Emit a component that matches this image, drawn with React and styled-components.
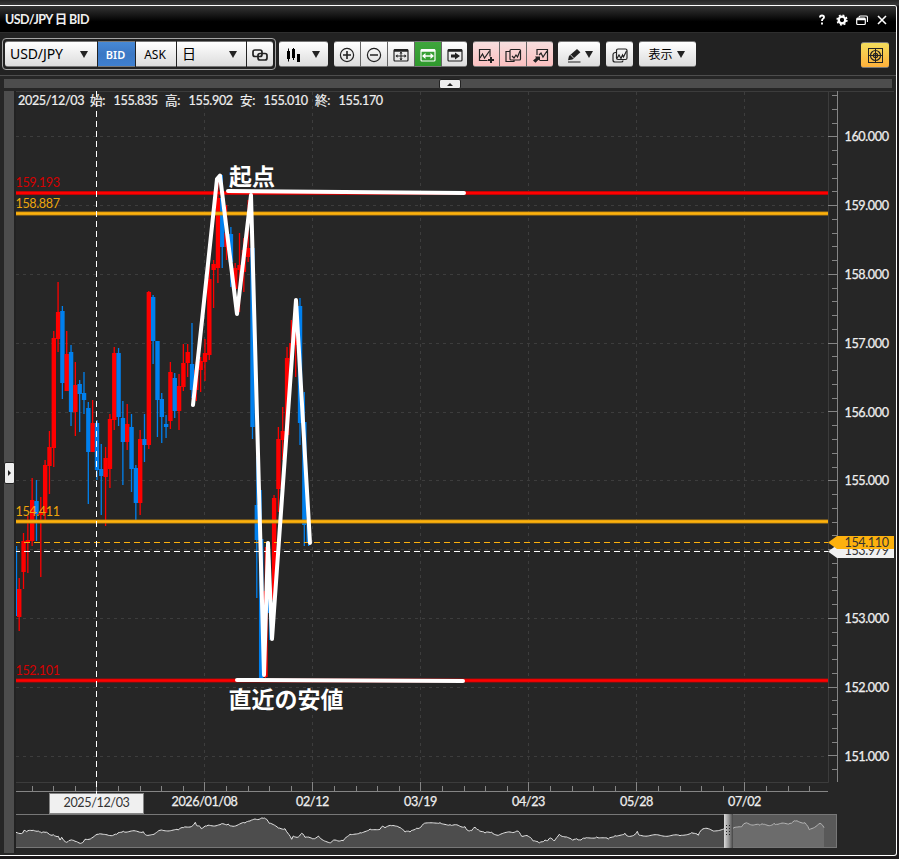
import React from 'react';
import styled, { createGlobalStyle, css } from 'styled-components';

const GlobalStyle = createGlobalStyle`
  * {
    box-sizing: border-box;
  }
  body {
    margin: 0;
    background: #1b181a;
    font-family: Lato, 'Noto Sans CJK JP', sans-serif;
    overflow: hidden;
  }
  svg {
    display: block;
  }
`;

const Desktop = styled.div`
  width: 899px;
  height: 859px;
  padding-top: 5px;
  background: linear-gradient(#262626, #3a3a3a 5px, #1b181a 6px);
`;

const Window = styled.div`
  width: 897px;
  height: 851px;
  display: flex;
  flex-direction: column;
  border: 1px solid #fff;
  border-left: 0;
  border-radius: 0 3px 3px 0;
  background: #262626;
  overflow: hidden;
`;

const TitleBar = styled.div`
  height: 26px;
  flex: none;
  display: flex;
  align-items: center;
  justify-content: space-between;
  padding: 0 8px 2px 5px;
  background: linear-gradient(#353535, #000 60%);
  color: #eee;
  font-size: 12.5px;
  font-weight: 700;
  letter-spacing: -0.55px;
`;

const WindowButtons = styled.div`
  display: flex;
  align-items: center;
  gap: 8px;
  padding-top: 3px;
`;

const Toolbar = styled.div`
  height: 44px;
  flex: none;
  display: flex;
  align-items: flex-start;
  padding: 5px 7px 0 2px;
  border-top: 1px solid #2e2e2e;
  border-bottom: 1px solid #4d4d4d;
  background: #222;
`;

const SymbolGroup = styled.div`
  display: flex;
  gap: 1px;
  width: 274px;
  height: 32px;
  padding: 2px;
  border: 1px solid #a5a5a5;
  border-radius: 4px;
`;

const ButtonGroup = styled.div`
  display: flex;
  gap: 1px;
  margin: ${({ $top }) => $top || 3}px 0 0 ${({ $gap }) => $gap || 6}px;
  background: #666;
  border-radius: 3px;
`;

const Arrow = styled.span`
  width: 0;
  border: 4px solid transparent;
  border-top: 7px solid #222;
  border-bottom: 0;
  margin-left: ${({ $gap }) => $gap || 0}px;
`;

const tones = {
  light: 'linear-gradient(#fff, #dcdcdc)',
  blue: 'linear-gradient(#4789d6, #3c78c4 50%, #3f80d0)',
  green: 'linear-gradient(#3fa63c, #2f9a2d)',
  pink: 'linear-gradient(#f6dede, #fbc0c0)',
  gold: 'linear-gradient(#f3dd5c, #ffb13b)',
};

const ToolButton = styled.button`
  width: ${({ $width }) => $width || 26}px;
  height: 26px;
  flex: none;
  display: flex;
  align-items: center;
  justify-content: center;
  margin: 0;
  padding: 0;
  border: 1px solid #777;
  border-width: 1px 0;
  background: ${({ $tone }) => tones[$tone || 'light']};
  color: ${({ $tone }) => ($tone === 'blue' || $tone === 'green' ? '#fff' : '#222')};
  font: 12px 'Noto Sans', 'Noto Sans CJK JP', sans-serif;

  &:first-child {
    border-radius: 3px 0 0 3px;
  }
  &:last-child {
    border-radius: 0 3px 3px 0;
  }
  &:only-child {
    border-radius: 3px;
  }
  svg {
    margin-top: 2px;
  }

  ${({ $tone }) =>
    $tone === 'blue' &&
    css`
      padding-right: 2px;
      font-weight: 600;
      font-size: 11px;
    `}
  ${({ $text }) =>
    $text &&
    css`
      padding-right: 2px;
      color: #000;
    `}
  ${({ $select }) =>
    $select &&
    css`
      justify-content: space-between;
      padding: 0 9px 2px 5px;
      font-size: 14px;
      letter-spacing: -0.1px;
      color: #000;

      ${Arrow} {
        margin-top: 2px;
      }
    `}
`;

const Spring = styled.div`
  flex: 1;
`;

const Splitter = styled.div`
  height: 9px;
  flex: none;
  display: flex;
  justify-content: center;
  margin: 3px 4px;
  background: #4d4d4d;
`;

const CollapseTop = styled.div`
  width: 22px;
  height: 10px;
  display: flex;
  align-items: center;
  justify-content: center;
  margin-left: 4px;
  border: 1px solid #222;
  border-radius: 2px;
  background: #eee;

  &::after {
    content: '';
    border: 3px solid transparent;
    border-top: 0;
    border-bottom: 3px solid #222;
  }
`;

const Workspace = styled.div`
  flex: 1;
  display: flex;
`;

const SideRail = styled.div`
  width: 12px;
  height: 762px;
  margin-left: 4px;
  padding-top: 371px;
  background: #4d4d4d;
  border-right: 2px solid #222;
`;

const CollapseSide = styled.div`
  width: 11px;
  height: 22px;
  display: flex;
  align-items: center;
  justify-content: center;
  border: 1px solid #222;
  border-radius: 2px;
  background: #eee;

  &::after {
    content: '';
    border: 3px solid transparent;
    border-left: 3px solid #222;
    border-right: 0;
  }
`;

const ChartColumn = styled.div`
  display: flex;
  flex-direction: column;
`;

const AxisText = styled.text`
  font: 400 12.6px Lato, sans-serif;
  letter-spacing: -0.38px;
  fill: ${({ $color }) => $color || '#eee'};
  stroke: ${({ $bold }) => ($bold ? '#eee' : 'none')};
  stroke-width: 0.25px;
`;

const InfoText = styled.text`
  font: 400 12.6px Lato, 'Noto Sans CJK JP', sans-serif;
  letter-spacing: -0.36px;
  fill: #eee;
  stroke: #eee;
  stroke-width: 0.2px;
`;

const NoteText = styled.text`
  font: 700 23px 'Noto Sans CJK JP', sans-serif;
  fill: #fff;
`;

// up/down flag, then high, body top, body bottom, low (y in chart px)
const candles = [
  [0, 545, 546, 616, 630], [1, 578, 589, 617, 631], [1, 533, 541, 572, 589],
  [1, 516, 540, 542, 573], [1, 478, 500, 541, 546], [0, 480, 501, 514, 541],
  [1, 497, 512, 515, 577], [1, 460, 465, 513, 520], [1, 431, 447, 466, 494],
  [1, 331, 338, 448, 467], [1, 282, 312, 339, 352], [0, 306, 311, 383, 399],
  [1, 331, 354, 391, 391], [0, 345, 352, 412, 426], [1, 362, 385, 412, 436],
  [0, 380, 384, 394, 432], [0, 372, 393, 400, 414], [0, 402, 408, 452, 504],
  [1, 400, 423, 452, 452], [0, 420, 423, 470, 480], [0, 444, 469, 476, 515],
  [1, 447, 458, 477, 526], [1, 414, 419, 469, 488], [1, 347, 353, 420, 430],
  [0, 348, 353, 417, 426], [0, 401, 418, 442, 485], [1, 404, 424, 442, 450],
  [0, 414, 427, 469, 492], [0, 465, 468, 503, 520], [1, 430, 439, 503, 515],
  [0, 414, 439, 445, 462], [1, 291, 292, 445, 449], [0, 295, 297, 341, 364],
  [0, 341, 341, 400, 437], [0, 393, 399, 417, 443], [0, 415, 424, 427, 438],
  [1, 362, 372, 421, 429], [0, 373, 378, 411, 418], [1, 374, 386, 411, 430],
  [1, 344, 363, 387, 391], [1, 344, 352, 363, 377], [0, 323, 364, 390, 398],
  [1, 362, 370, 390, 401], [1, 357, 361, 370, 392], [1, 339, 353, 362, 381],
  [1, 265, 279, 355, 360], [1, 260, 264, 270, 308], [1, 180, 198, 268, 283],
  [0, 175, 198, 247, 268], [1, 205, 233, 247, 260], [0, 227, 234, 262, 287],
  [1, 263, 268, 289, 300], [1, 233, 265, 270, 312], [1, 238, 250, 272, 292],
  [1, 200, 248, 257, 262], [0, 225, 248, 427, 439], [0, 457, 505, 540, 598],
  [0, 490, 539, 678, 678], [1, 547, 591, 677, 678], [0, 560, 595, 613, 640],
  [1, 495, 498, 600, 625], [1, 427, 439, 489, 512], [1, 407, 431, 440, 460],
  [1, 347, 358, 435, 440], [1, 320, 343, 360, 370], [1, 310, 340, 345, 377],
  [0, 298, 306, 423, 445], [0, 392, 422, 525, 546], [0, 522, 525, 543, 546],
];

const CANDLE_STEP = 4.32;
const FIRST_CANDLE = 97 - CANDLE_STEP * 19;
const PRICE_STEP = 68.8;

const prices = [160, 159, 158, 157, 156, 155, 154, 153, 152, 151];
const dates = ['2026/01/08', '02/12', '03/19', '04/23', '05/28', '07/02'];
const priceY = (price) => Math.round(136.4 + (160 - price) * PRICE_STEP) + 0.5;

const levels = [
  { y: 193, price: '159.193', color: '#f00', edge: '#a80808', label: '#d40000' },
  { y: 213.5, price: '158.887', color: '#fdb10d', edge: '#b58012', label: '#eda50c' },
  { y: 521.5, price: '154.411', color: '#fdb10d', edge: '#b58012', label: '#eda50c' },
  { y: 680.5, price: '152.101', color: '#f00', edge: '#a80808', label: '#d40000' },
];

// traced in thirds of a pixel
const history = [
  48, 217, 68, 219, 72, 211, 80, 215, 100, 211, 115, 213, 125, 219, 135, 217, 148, 223, 160, 224,
  175, 229, 180, 240, 185, 232, 192, 242, 200, 247, 210, 241, 225, 244, 245, 249, 255, 238, 275, 234,
  295, 223, 325, 226, 350, 223, 370, 214, 430, 215, 440, 226, 462, 223, 480, 211, 535, 210, 550, 203,
  578, 197, 586, 187, 592, 198, 598, 198, 604, 206, 620, 198, 660, 194, 685, 192, 695, 198, 735, 189,
  750, 183, 765, 177, 790, 175, 800, 178, 808, 190, 835, 204, 855, 206, 875, 238, 880, 228, 895, 231,
  905, 220, 915, 232, 930, 233, 940, 236, 955, 228, 970, 241, 992, 248, 1005, 240, 1030, 242,
  1050, 223, 1080, 218, 1110, 207, 1140, 208, 1145, 200, 1155, 203, 1175, 197, 1197, 202, 1215, 216,
  1230, 216, 1250, 204, 1262, 202, 1270, 192, 1320, 188, 1350, 194, 1395, 200, 1405, 212, 1415, 212,
  1425, 202, 1435, 209, 1455, 219, 1475, 217, 1495, 226, 1530, 216, 1555, 214, 1565, 229, 1585, 229,
  1600, 243, 1618, 249, 1635, 240, 1643, 242, 1652, 234, 1663, 243, 1678, 223, 1695, 231, 1718, 241,
  1730, 236, 1743, 240, 1755, 235, 1790, 231, 1825, 237, 1845, 227, 1875, 220, 1885, 229, 1905, 223,
  1912, 214, 1918, 226, 2040, 227, 2075, 218, 2095, 226, 2105, 209, 2125, 206, 2140, 213, 2175, 205,
  2198, 206, 2225, 200, 2235, 190, 2280, 196, 2290, 193, 2308, 197, 2322, 190, 2330, 193, 2370, 190,
  2387, 183, 2415, 188, 2428, 209, 2460, 190, 2472, 203,
];

const historyPoints = () => {
  const points = [];
  for (let i = 0; i < history.length - 2; i += 2) {
    const [x1, y1, x2, y2] = history.slice(i, i + 4);
    const steps = Math.max(1, Math.round((x2 - x1) / 4));
    for (let s = 0; s < steps; s += 1) {
      const x = x1 + ((x2 - x1) * s) / steps;
      const wobble = s ? Math.sin(x * 1.7) * 2.4 : 0;
      points.push([x / 3, 760 + (y1 + ((y2 - y1) * s) / steps + wobble) / 3]);
    }
  }
  points.push([824, 827.7]);
  return points.map(([x, y]) => `${x.toFixed(1)},${y.toFixed(1)}`).join(' ');
};

const Icon = ({ children, width = 1.2 }) => (
  <svg
    width="18"
    height="18"
    viewBox="0 0 18 18"
    fill="none"
    stroke="currentColor"
    strokeWidth={width}
  >
    {children}
  </svg>
);

const LinkIcon = () => (
  <Icon width={1.7}>
    <rect x="2" y="4" width="9" height="6.5" rx="2" />
    <rect x="7" y="7.5" width="9" height="6.5" rx="2" />
  </Icon>
);

const CandleIcon = () => (
  <svg width="15" height="18" viewBox="0 0 15 18" fill="#000">
    <path d="M0 5h3v8H0zM1 2.500h1v13H1zM5 3h3v9H5zM6 2h1v12H6zM10 8h3v8h-3z" />
  </svg>
);

const ZoomIcon = ({ plus }) => (
  <Icon>
    <circle cx="9" cy="9" r="6.6" />
    <path d={plus ? 'M5 9h8M9 5v8' : 'M5 9h8'} strokeWidth="1.6" />
  </Icon>
);

const FrameIcon = ({ children }) => (
  <Icon>
    <rect x="2" y="3.5" width="14" height="11.5" rx="1" />
    <path d="M2 4.500h14" strokeWidth="2.4" />
    {children}
  </Icon>
);

const MoveIcon = () => (
  <FrameIcon>
    <path d="M4.500 10h9M9 6v8" strokeWidth="1" />
    <path
      d="M3.500 10l2-1.800v3.600zM14.500 10l-2-1.800v3.600zM9 5.500l-1.600 2h3.200zM9 14.500l-1.600-2h3.200z"
      fill="currentColor"
      stroke="none"
    />
  </FrameIcon>
);

const FitIcon = () => (
  <FrameIcon>
    <path d="M5 10h8" strokeWidth="1.6" />
    <path d="M3 10l3.500-3v6zM15 10l-3.500-3v6z" fill="currentColor" stroke="none" />
  </FrameIcon>
);

const ForwardIcon = () => (
  <FrameIcon>
    <path d="M5 8.500h4v-2l5 3.500-5 3.500v-2H5z" fill="currentColor" stroke="none" />
  </FrameIcon>
);

const ChartAddIcon = () => (
  <Icon>
    <path d="M10.500 14.500H2.500v-11h10.500v7" />
    <path d="M3 12l2.500-4 2 4L12.500 5" />
    <path d="M14 11v6M11 14h6" strokeWidth="2" />
  </Icon>
);

const ChartCopyIcon = () => (
  <Icon>
    <rect x="6" y="3.5" width="10.5" height="10.5" rx="1" />
    <path d="M6 5.500H2v10h8V14M8 10l2 2 2-3 1.500 2L16 5" />
  </Icon>
);

const ChartImportIcon = () => (
  <Icon>
    <path d="M6 9V3.500h10.500v11H9M8 9l2-2 2 4 4-6" />
    <path d="M4 10.500h5V15l-1.500-1.200-3 3-2.500-2.300 3-2.500z" fill="currentColor" stroke="none" />
  </Icon>
);

const PencilIcon = () => (
  <Icon>
    <path d="M3 10l8-7 3.400 3.200-8 7.200-4.400.8z" fill="currentColor" stroke="none" />
    <path d="M4.500 8.800l3 3.200" stroke="#fff" strokeWidth="0.8" />
    <path d="M2 16h12.500" />
  </Icon>
);

const TemplateIcon = () => (
  <Icon>
    <path d="M5 6.500H4.500a2.300 2.300 0 0 0-2.500 2.300v5.200q0 2 2 2h6q2 0 2-1.600" />
    <rect x="5.5" y="3" width="10.5" height="10.5" rx="1.5" />
    <path d="M6 12.500L8 9l2 3.500L11.500 9l1 2L15.500 5" />
  </Icon>
);

const TargetIcon = () => (
  <Icon width={1}>
    <rect x="2.5" y="1.5" width="14" height="14" />
    <circle cx="9.5" cy="8.5" r="5" strokeWidth="1.2" />
    <circle cx="9.5" cy="8.5" r="2.2" strokeWidth="1.2" />
    <path d="M2.500 8.500h14M9.500 1.500v14" />
  </Icon>
);

const HelpIcon = () => (
  <svg width="12" height="14" viewBox="0 0 12 14" fill="none" stroke="#fff" strokeWidth="1.9">
    <path d="M4 4.500q0-2 2-2t2 1.700q0 1-1 1.600t-1 2V8" />
    <path d="M6 9.500v2" />
  </svg>
);

const GearIcon = () => (
  <svg width="12" height="14" viewBox="0 0 12 14" fill="none" stroke="#fff">
    <circle cx="6" cy="7" r="3.3" strokeWidth="2.3" />
    <circle cx="6" cy="7" r="4.9" strokeWidth="1.5" strokeDasharray="1.92 1.92" />
  </svg>
);

const RestoreIcon = () => (
  <svg width="12" height="14" viewBox="0 0 12 14" fill="none" stroke="#fff" strokeWidth="1.2">
    <path d="M3 4.500q0-1.500 1.500-1.500h5.500q1.500 0 1.500 1.500v4.500" />
    <rect x="0.7" y="5.2" width="8.6" height="6.3" rx="1" />
    <path d="M1 6.200h8" strokeWidth="2" />
  </svg>
);

const CloseIcon = () => (
  <svg width="12" height="14" viewBox="0 0 12 14" fill="none" stroke="#fff" strokeWidth="1.6">
    <path d="M2 3l8 8M10 3l-8 8" />
  </svg>
);

const Candle = ({ index, data: [up, high, top, bottom, low] }) => {
  const x = FIRST_CANDLE + index * CANDLE_STEP;
  return (
    <g fill={up ? '#f00' : '#0080ee'}>
      <rect x={x - 0.7} y={high} width="1.3" height={low - high} />
      <rect x={x - 2.2} y={top} width="4.4" height={bottom - top} />
    </g>
  );
};

const Grid = () => (
  <g stroke="#3d3d3d" strokeDasharray="3 4">
    {prices.map((price) => (
      <path key={price} d={`M16 ${priceY(price)}H828`} />
    ))}
    {dates.map((date, i) => (
      <path key={date} d={`M${204.5 + i * 108} 92V782`} />
    ))}
  </g>
);

const PriceAxis = () => (
  <>
    <path d="M828.5 92V782.500H16M16 91.500H894" stroke="#3c3c3c" fill="none" />
    <g stroke="#858585">
      <path d="M837.5 91V782" />
      {Array.from({ length: 50 }, (_, i) => {
        const y = Math.round(95 + i * 13.76) + 0.5;
        return <path key={i} d={`M${i % 5 === 3 ? 828 : 832} ${y}H837`} />;
      })}
    </g>
    {prices
      .filter((price) => price !== 154)
      .map((price) => (
        <AxisText key={price} x="844.5" y={priceY(price) + 4.5} $bold>
          {price}.000
        </AxisText>
      ))}
    <path d="M828 551.500l9-6.500h57v13h-57z" fill="#f0f0f0" />
    <AxisText x="844.5" y="555" $color="#333">153.979</AxisText>
    <path d="M828 542.500l9-6.500h57v13h-57z" fill="#fdb10d" />
    <AxisText x="844.5" y="546.5" $color="#333">154.110</AxisText>
  </>
);

const TimeAxis = () => (
  <>
    <g stroke="#858585">
      <path d="M16 791.500H828" />
      {Array.from({ length: 37 }, (_, i) => {
        const x = Math.floor(32.2 + i * 21.6 - (i % 5 === 3 ? 0.6 : 0)) + 0.5;
        return <path key={i} d={`M${x} ${i % 5 === 3 ? 782 : 786}V791`} />;
      })}
    </g>
    {dates.map((date, i) => (
      <AxisText key={date} x={204.5 + i * 108} y="806" textAnchor="middle" $bold>
        {date}
      </AxisText>
    ))}
    <rect x="49.5" y="793.5" width="94" height="20" fill="#f0f0f0" stroke="#858585" />
    <AxisText x="96.5" y="807" textAnchor="middle" $color="#333">2025/12/03</AxisText>
  </>
);

const PriceChart = () => (
  <svg width="880" height="723" viewBox="16 91 880 723">
    <Grid />
    <PriceAxis />
    {candles.map((data, i) => (
      <Candle key={i} index={i} data={data} />
    ))}
    {levels.map(({ y, price, color, edge, label }) => (
      <g key={price}>
        <path d={`M16 ${y}H828`} stroke={edge} strokeWidth="4" />
        <path d={`M16 ${y}H828`} stroke={color} strokeWidth="2.4" />
        <AxisText x="15.5" y={y - 5.9} $color={label}>{price}</AxisText>
      </g>
    ))}
    <path d="M16 542.500H828" stroke="#fdb10d" strokeDasharray="6 4" strokeDashoffset="2" />
    <path d="M16 551.500H828" stroke="#fff" strokeDasharray="6 4" strokeDashoffset="2" />
    <TimeAxis />
    <path d="M96.5 91V794" stroke="#fff" strokeDasharray="6 4" />
    <InfoText y="104.8">
      <tspan x="18">2025/12/03</tspan>
      <tspan x="90">始:</tspan>
      <tspan x="113.5">155.835</tspan>
      <tspan x="165">高:</tspan>
      <tspan x="188.5">155.902</tspan>
      <tspan x="240">安:</tspan>
      <tspan x="263.5">155.010</tspan>
      <tspan x="315">終:</tspan>
      <tspan x="338.5">155.170</tspan>
    </InfoText>
    <g fill="none" stroke="#fff" strokeWidth="4" strokeLinecap="round" strokeLinejoin="round">
      <path d="M193 405L217 179L220 175.500L237 314L251 195L264 675L268 543L272 639L296 300L310 543" />
      <path d="M228 191L464 193M237 680L463 681" />
    </g>
    <NoteText x="229" y="184.5">起点</NoteText>
    <NoteText x="228.5" y="707.5">直近の安値</NoteText>
  </svg>
);

const Overview = () => {
  const points = historyPoints();
  return (
    <svg width="880" height="38" viewBox="16 814 880 38">
      <polygon points={`16,847 ${points} 824,847`} fill="#4d4d4d" />
      <polyline points={points} fill="none" stroke="#e4e4e4" />
      <path d="M16 814.500H837M16 847.500H837M836.500 814V848" stroke="#777" />
      <rect x="732" y="815" width="104" height="32" fill="#888" fillOpacity="0.53" />
      <defs>
        <linearGradient id="handle">
          <stop offset="0" stopColor="#ddd" />
          <stop offset="0.5" stopColor="#999" />
          <stop offset="1" stopColor="#444" />
        </linearGradient>
      </defs>
      <rect x="724" y="814" width="9" height="34" fill="url(#handle)" />
      <path d="M726.5 825v12M729.5 825v12" stroke="#222" strokeDasharray="1 2" />
    </svg>
  );
};

const App = () => {
  return (
    <>
      <GlobalStyle />
      <Desktop>
        <Window>
          <TitleBar>
            <span>USD/JPY 日 BID</span>
            <WindowButtons>
              <HelpIcon />
              <GearIcon />
              <RestoreIcon />
              <CloseIcon />
            </WindowButtons>
          </TitleBar>
          <Toolbar>
            <SymbolGroup>
              <ToolButton $width={92} $select>
                USD/JPY <Arrow />
              </ToolButton>
              <ToolButton $width={37} $tone="blue">BID</ToolButton>
              <ToolButton $width={40} $text>ASK</ToolButton>
              <ToolButton $width={69} $select>
                日 <Arrow />
              </ToolButton>
              <ToolButton>
                <LinkIcon />
              </ToolButton>
            </SymbolGroup>
            <ButtonGroup $gap={3}>
              <ToolButton $width={49}>
                <CandleIcon />
                <Arrow $gap={10} />
              </ToolButton>
            </ButtonGroup>
            <ButtonGroup>
              <ToolButton>
                <ZoomIcon plus />
              </ToolButton>
              <ToolButton>
                <ZoomIcon />
              </ToolButton>
              <ToolButton>
                <MoveIcon />
              </ToolButton>
              <ToolButton $tone="green">
                <FitIcon />
              </ToolButton>
              <ToolButton $width={25}>
                <ForwardIcon />
              </ToolButton>
            </ButtonGroup>
            <ButtonGroup>
              <ToolButton $tone="pink">
                <ChartAddIcon />
              </ToolButton>
              <ToolButton $tone="pink">
                <ChartCopyIcon />
              </ToolButton>
              <ToolButton $tone="pink">
                <ChartImportIcon />
              </ToolButton>
            </ButtonGroup>
            <ButtonGroup $gap={5}>
              <ToolButton $width={42}>
                <PencilIcon />
                <Arrow $gap={1} />
              </ToolButton>
            </ButtonGroup>
            <ButtonGroup>
              <ToolButton $width={27}>
                <TemplateIcon />
              </ToolButton>
            </ButtonGroup>
            <ButtonGroup>
              <ToolButton $width={57} $text>
                表示 <Arrow $gap={4} />
              </ToolButton>
            </ButtonGroup>
            <Spring />
            <ButtonGroup $gap={1} $top={4}>
              <ToolButton $width={28} $tone="gold">
                <TargetIcon />
              </ToolButton>
            </ButtonGroup>
          </Toolbar>
          <Splitter>
            <CollapseTop />
          </Splitter>
          <Workspace>
            <SideRail>
              <CollapseSide />
            </SideRail>
            <ChartColumn>
              <PriceChart />
              <Overview />
            </ChartColumn>
          </Workspace>
        </Window>
      </Desktop>
    </>
  );
};

export default App;
